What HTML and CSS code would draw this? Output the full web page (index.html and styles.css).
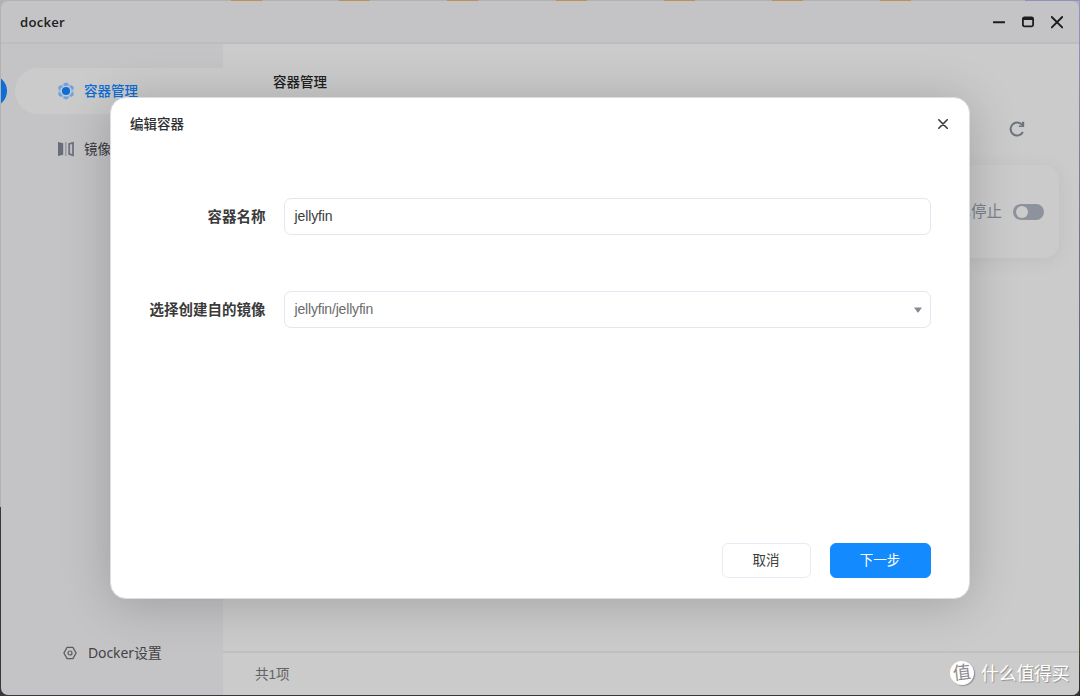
FILE: index.html
```html
<!DOCTYPE html>
<html lang="zh-CN">
<head>
<meta charset="utf-8">
<title>docker</title>
<link rel="stylesheet" href="styles.css">
</head>
<body>
<div class="window">
  <header class="titlebar">
    <span class="app-name">docker</span>
    <div class="controls">
      <svg width="12" height="14" viewBox="0 0 12 14"><path d="M0.7 7.3H11.3" stroke="#1c1c1c" stroke-width="1.9" stroke-linecap="round"/></svg>
      <svg width="12" height="14" viewBox="0 0 12 14"><rect x=".9" y="2.4" width="10.2" height="8.9" rx="1.5" fill="none" stroke="#1c1c1c" stroke-width="1.8"/><path d="M1 3.6H11" stroke="#1c1c1c" stroke-width="2.8"/></svg>
      <svg width="12" height="14" viewBox="0 0 12 14"><path d="M.8 2L11.2 12.4M11.2 2L.8 12.4" stroke="#1c1c1c" stroke-width="1.9" stroke-linecap="round"/></svg>
    </div>
  </header>
  <div class="main">
    <nav class="sidebar">
      <span class="active-mark"></span>
      <a class="nav-item active">
        <svg width="18" height="18" viewBox="0 0 18 18"><path d="M9 1.8L15.4 5.3V12.7L9 16.2L2.6 12.7V5.3Z" fill="none" stroke="#9dbbdd" stroke-width="2"/><g fill="none" stroke="#72a1d8" stroke-width="2.4" stroke-linejoin="round"><path d="M6.9 2.9L9 1.7L11.1 2.9"/><path d="M6.9 15.1L9 16.3L11.1 15.1"/><path d="M13.2 4.1L15.4 5.4V7.6"/><path d="M15.4 10.4V12.6L13.2 13.9"/><path d="M4.8 4.1L2.6 5.4V7.6"/><path d="M2.6 10.4V12.6L4.8 13.9"/></g><circle cx="9" cy="9" r="4.1" fill="#0e6ed5"/></svg>
        <span>容器管理</span>
      </a>
      <a class="nav-item">
        <svg width="18" height="18" viewBox="0 0 18 18"><path d="M1 2L6.2 3.2V14.8L1 16Z" fill="#6a6d79"/><path d="M8.8 2V16" stroke="#9699a2" stroke-width="1.4"/><path d="M16 2.8L12.2 3.9V14.1L16 15.2Z" fill="none" stroke="#70737f" stroke-width="1.8"/></svg>
        <span>镜像管理</span>
      </a>
      <a class="nav-settings">
        <svg width="14" height="14" viewBox="0 0 14 14"><path d="M4.1 1.4H9.9L13.1 7L9.9 12.6H4.1L.9 7Z" fill="none" stroke="#5b5b5e" stroke-width="1.3" stroke-linejoin="round"/><circle cx="7" cy="7" r="2" fill="none" stroke="#5b5b5e" stroke-width="1.2"/></svg>
        <span>Docker设置</span>
      </a>
    </nav>
    <section class="content">
      <h1 class="page-title">容器管理</h1>
      <div class="toolbar">
        <svg width="18" height="18" viewBox="0 0 18 18"><path d="M14.9 12A6.5 6.5 0 1 1 14.2 5" fill="none" stroke="#6c737f" stroke-width="2"/><path d="M16.2 1.8V7H10.8V5.4H14V1.8Z" fill="#6c737f"/></svg>
      </div>
      <div class="card">
        <span class="status">已停止</span>
        <span class="switch"></span>
      </div>
      <footer class="footer">共1项</footer>
    </section>
  </div>
</div>

<div class="desktop-edge"><i></i><i></i><i></i><i></i><i></i><i></i><i></i></div>
<div class="desktop-side"></div>

<div class="dialog">
  <div class="dialog-head">
    <h2>编辑容器</h2>
    <svg width="10" height="10" viewBox="0 0 10 10"><path d="M.8 .8L9.2 9.2M9.2 .8L.8 9.2" stroke="#3a3a3a" stroke-width="1.6" stroke-linecap="round"/></svg>
  </div>
  <div class="form">
    <div class="row"><label>容器名称</label><div class="field"><span>jellyfin</span></div></div>
    <div class="row"><label>选择创建自的镜像</label><div class="field select"><span>jellyfin/jellyfin</span><svg width="8" height="6" viewBox="0 0 8 6"><path d="M0 .4H8L4.6 5.2Q4 5.8 3.4 5.2Z" fill="#858b96"/></svg></div></div>
  </div>
  <div class="actions">
    <div class="btn">取消</div>
    <div class="btn primary">下一步</div>
  </div>
</div>

<div class="watermark"><span class="badge">值</span><span class="brand">什么值得买</span></div>
</body>
</html>
```
FILE: styles.css
```css
* { box-sizing: border-box; }
body {
  margin: 0;
  width: 1080px;
  height: 696px;
  padding: 1px;
  overflow: hidden;
  position: relative;
  background: linear-gradient(#b2b2b3 0 507px, #38383b 507px);
  font-family: "Liberation Sans", "Noto Sans CJK SC", sans-serif;
  font-size: 13.5px;
}
svg { display: block; flex: none; }
h1, h2 { margin: 0; }
.window {
  height: 694px;
  display: flex;
  flex-direction: column;
  border-radius: 7px;
  overflow: hidden;
  background: #c4c4c6;
}
.titlebar {
  height: 43px;
  flex: none;
  display: flex;
  align-items: center;
  justify-content: space-between;
  padding: 0 16px 0 19px;
  border-bottom: 2px solid #bdbdbe;
}
.app-name {
  font: 600 13.2px/20px "Open Sans", sans-serif;
  letter-spacing: .2px;
  color: #202020;
}
.controls { display: flex; gap: 17px; }
.main { flex: 1; display: flex; min-height: 0; }
.sidebar {
  width: 222px;
  display: flex;
  flex-direction: column;
  padding-top: 24px;
  position: relative;
}
.active-mark {
  position: absolute;
  left: -26px;
  top: 31px;
  width: 32px;
  height: 32px;
  border-radius: 50%;
  background: #0e6ed5;
}
.nav-item {
  height: 46px;
  margin: 0 0 12px 14px;
  padding-left: 42px;
  display: flex;
  align-items: center;
  gap: 9px;
  color: #37373a;
}
.nav-item span { padding-bottom: 2px; }
.nav-item.active {
  background: #cbcbcb;
  border-radius: 23px 0 0 23px;
  color: #0e6ed5;
  font-weight: 500;
}
.nav-settings {
  margin-top: auto;
  margin-bottom: 31px;
  padding-left: 62px;
  height: 22px;
  display: flex;
  align-items: center;
  gap: 11px;
  font-family: "Noto Sans", "Noto Sans CJK SC", sans-serif;
  font-size: 14px;
  letter-spacing: -.1px;
  color: #434345;
}
.nav-settings span { padding-bottom: 2px; }
.content {
  flex: 1;
  background: #cbcbcb;
  display: flex;
  flex-direction: column;
}
.page-title {
  padding: 29px 0 0 50px;
  font-size: 13.5px;
  line-height: 20px;
  font-weight: 500;
  color: #202020;
}
.toolbar {
  display: flex;
  justify-content: flex-end;
  padding: 27px 53px 0 0;
}
.card {
  margin: 27px 20px 0 32px;
  height: 93px;
  padding-right: 15px;
  display: flex;
  align-items: center;
  justify-content: flex-end;
  gap: 11px;
  border-radius: 15px;
  background: #cbcbcb;
  box-shadow: 0 3px 16px rgba(110, 120, 145, .14);
}
.status { font-size: 15.5px; color: #7b818e; padding-bottom: 3px; }
.switch {
  width: 31px;
  height: 16px;
  border-radius: 8px;
  padding: 2px 3px;
  background: #8e929d;
}
.switch::before {
  content: "";
  display: block;
  width: 12px;
  height: 12px;
  border-radius: 50%;
  background: #cbcbcb;
}
.footer {
  margin-top: auto;
  height: 44px;
  border-top: 2px solid #c0c0c0;
  padding-left: 32px;
  line-height: 43px;
  color: #626262;
}
.desktop-edge {
  position: absolute;
  left: 0;
  top: 0;
  width: 1080px;
  height: 1px;
  padding-left: 231px;
  display: flex;
  gap: 77.2px;
  background: linear-gradient(90deg, transparent 1025px, #8f91bd 1025px);
}
.desktop-edge i { width: 31px; height: 1px; background: #be9152; }
.desktop-side {
  position: absolute;
  left: 1079px;
  top: 0;
  width: 1px;
  height: 696px;
  background: linear-gradient(#9296c8, #6d7190 250px, #465b6b 540px, #435339 640px, #1e2c1f);
}
.dialog {
  position: absolute;
  left: 110px;
  top: 97px;
  width: 860px;
  height: 502px;
  border: 1px solid #dcdce5;
  border-radius: 16px;
  background: #fff;
  box-shadow: 0 5px 50px rgba(0, 0, 0, .2);
  display: flex;
  flex-direction: column;
}
.dialog-head {
  height: 52px;
  padding: 0 21px 0 19px;
  display: flex;
  align-items: center;
  justify-content: space-between;
}
.dialog-head h2 { font-size: 13.5px; font-weight: 500; color: #303030; padding-bottom: 2px; }
.form {
  padding: 48px 38px 0 0;
  display: flex;
  flex-direction: column;
  gap: 56px;
}
.row { display: flex; align-items: center; height: 37px; }
.row label {
  width: 155px;
  margin-right: 18px;
  padding: 0 .5px 3px 0;
  text-align: right;
  font-size: 14.5px;
  font-weight: 600;
  color: #3a3a3a;
}
.field {
  flex: 1;
  height: 37px;
  display: flex;
  align-items: center;
  padding: 0 8px 0 9.5px;
  border: 1px solid #e4e6f1;
  border-radius: 7px;
  font-size: 14px;
  letter-spacing: -.12px;
  color: #3b3b3b;
}
.field span { padding-bottom: 1px; }
.select { justify-content: space-between; color: #6b6b6b; letter-spacing: -.18px; }
.actions {
  margin-top: auto;
  padding: 0 38.5px 20px 0;
  display: flex;
  justify-content: flex-end;
  gap: 19px;
}
.btn {
  width: 89px;
  height: 35px;
  border: 1px solid #e9eaf3;
  border-radius: 6px;
  line-height: 33px;
  text-align: center;
  color: #3b3b3b;
}
.btn.primary {
  width: 101px;
  border-color: #148aff;
  background: #148aff;
  color: #fff;
}
.watermark {
  position: absolute;
  left: 950px;
  top: 660px;
  display: flex;
  align-items: center;
  gap: 7px;
  height: 25px;
  color: #fff;
  font-size: 17.7px;
  white-space: nowrap;
  text-shadow: 1px 1px 1px rgba(0, 0, 0, .3);
}
.brand { padding-bottom: 2px; }
.badge {
  width: 24px;
  height: 24px;
  border-radius: 50%;
  background: #fff;
  color: #8c8c8c;
  font-size: 18px;
  line-height: 24px;
  text-align: center;
  transform: rotate(-7deg);
  text-shadow: none;
  box-shadow: 1px 1px 1px rgba(0, 0, 0, .3);
}
```
